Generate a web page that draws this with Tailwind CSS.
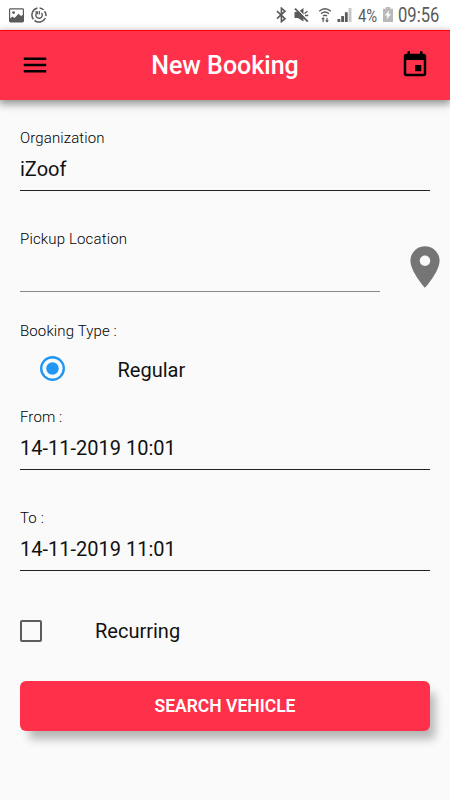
<!DOCTYPE html>
<html lang="en">
<head>
  <meta charset="UTF-8">
  <meta name="viewport" content="width=device-width, initial-scale=1.0">
  <title>New Booking</title>
  <script src="https://cdn.jsdelivr.net/npm/@tailwindcss/browser@4"></script>
</head>
<body class="bg-[#fafafa] h-[800px] overflow-hidden font-['Roboto',sans-serif] text-[#111]">

  <!-- Status bar -->
  <div class="h-[30px] bg-white flex items-center justify-between pl-[9px] pr-[10px] text-[#5a5a5a]">
    <div class="flex items-center gap-[7px]">
      <svg class="w-[15px] h-[15px]" viewBox="0 0 15 15">
        <rect x=".6" y=".9" width="13.8" height="13" rx=".8" fill="none" stroke="currentColor" stroke-width="1.2"/>
        <path d="M1 14v-3.5l2.5-2 2 1.5 4-4.2L12 8l2-1.2V14z" fill="currentColor"/>
        <circle cx="4.6" cy="4.6" r="1.4" fill="currentColor"/>
      </svg>
      <svg class="w-4 h-4" viewBox="0 0 16 16" fill="none" stroke="currentColor">
        <path d="M6.4 1.1a7.1 7.1 0 0 0-4 11.2M3.4 13.4a7.1 7.1 0 0 0 11-2.4M15 9.2a7.1 7.1 0 0 0-1.4-5M12.6 2.7A7 7 0 0 0 8.6.9" stroke-width="1.5"/>
        <path d="M6 5.6a3.2 3.2 0 1 0 4.4.3" stroke-width="1.4"/>
        <path d="M4.3 4.9h2.3v2.3M8.4 4v3.4" stroke-width="1.1"/>
      </svg>
    </div>
    <div class="flex items-center">
      <svg class="w-[11px] h-4 mr-[7px]" viewBox="0 0 11 16" fill="none" stroke="currentColor" stroke-width="1.6">
        <path d="M1 4.2l8 7.5-3.6 3V1.2l3.6 3-8 7.5"/>
      </svg>
      <svg class="w-4 h-4 mr-[8px]" viewBox="0 0 16 16">
        <path d="M.5 5h3.5l5.5-4v13.4L4 11H.5z" fill="currentColor"/>
        <path d="M1.8 0.8l13 13" stroke="#fff" stroke-width="1.4"/>
        <path d="M1 1.6l12.8 13" stroke="currentColor" stroke-width="1.9"/>
        <path d="M10.5 6.5l3-2.3M11 8.5h3.3" stroke="currentColor" stroke-width="1.3"/>
      </svg>
      <svg class="w-[14px] h-4 mr-[5px]" viewBox="0 0 14 16" fill="none" stroke="currentColor" stroke-width="1.4">
        <path d="M1.2 4.2q5.8-5 11.6 0M3.1 6.7q3.9-3.3 7.8 0M5 9q2-1.6 4 0"/>
        <path d="M5.1 15v-4M9 10.7v4" stroke-width="1.2"/>
        <path d="M3.2 12.2l1.9-2.2L7 12.2zM7.1 13.2l1.9 2.2 1.9-2.2z" fill="currentColor" stroke="none"/>
      </svg>
      <svg class="w-[15px] h-4 mr-[6px]" viewBox="0 0 15 16" fill="currentColor">
        <path d="M.5 12h2.8v3H.5zM4.2 9.1H7V15H4.2zM7.9 5.3h2.8V15H7.9z"/>
        <path d="M11.6 1h2.9v14h-2.9z" fill="#c8c8c8"/>
      </svg>
      <span class="w-[21px] text-[19px] leading-none"><span class="inline-block origin-left scale-x-[.78]">4%</span></span>
      <svg class="w-[10px] h-[15px] ml-[4px] mr-[5px] -mt-px" viewBox="0 0 10 15">
        <path d="M0 1.7h2.8V0h4.4v1.7H10V15H0z" fill="#b9b9b9"/>
        <path d="M6 3.3L1.9 8.6h2.5l-.7 3.8L8 7.1H5.5z" fill="#fff"/>
      </svg>
      <span class="w-[42px] text-[20px] leading-none"><span class="inline-block origin-left scale-x-[.83]">09:56</span></span>
    </div>
  </div>

  <!-- App bar -->
  <header class="relative h-[70px] bg-[#ff3049] border-t border-[#ff0008] shadow-[0_3px_8px_1px_rgba(0,0,0,0.42)] flex items-center justify-between px-5 pb-[2px]">
    <svg class="w-[30px] h-[30px]" viewBox="0 0 24 24"><path d="M3 18h18v-2H3v2zm0-5h18v-2H3v2zm0-7v2h18V6H3z"/></svg>
    <h1 class="text-white text-[25px] font-medium leading-[30px] pt-[2px]">New Booking</h1>
    <svg class="w-[30px] h-[30px]" viewBox="0 0 24 24"><path d="M17 12h-5v5h5v-5zM16 1v2H8V1H6v2H5c-1.11 0-1.99.9-1.99 2L3 19c0 1.1.89 2 2 2h14c1.1 0 2-.9 2-2V5c0-1.1-.9-2-2-2h-1V1h-2zm3 18H5V8h14v11z"/></svg>
  </header>

  <main class="px-5 pt-[28px]">
    <!-- Organization -->
    <div class="h-[63px] border-b border-[#222]">
      <p class="text-[15px] leading-5 font-light tracking-[0.12px] text-black">Organization</p>
      <p class="text-[20px] leading-6 mt-[9px]">iZoof</p>
    </div>

    <!-- Pickup location -->
    <div class="mt-[38px] h-[65px] flex">
      <div class="w-[360px] h-[63px] border-b border-[#888]">
        <p class="text-[15px] leading-5 font-light tracking-[0.15px] text-black">Pickup Location</p>
      </div>
      <svg class="w-[50px] h-[50px] ml-5 mt-[13px] -mr-5 shrink-0" viewBox="0 0 24 24" fill="#757575"><path d="M12 2C8.13 2 5 5.13 5 9c0 5.25 7 13 7 13s7-7.75 7-13c0-3.87-3.13-7-7-7zm0 9.5c-1.38 0-2.5-1.12-2.5-2.5s1.12-2.5 2.5-2.5 2.5 1.12 2.5 2.5-1.12 2.5-2.5 2.5z"/></svg>
    </div>

    <!-- Booking type -->
    <p class="text-[15px] leading-5 font-light tracking-[0.12px] text-black mt-[27px]">Booking Type :</p>
    <label class="flex items-center h-[49px] pl-5 mt-[3px]">
      <svg class="w-[25px] h-[25px] mr-[52.5px]" viewBox="0 0 25 25">
        <circle cx="12.5" cy="12.5" r="11.3" fill="none" stroke="#2196f3" stroke-width="2.4"/>
        <circle cx="12.5" cy="12.5" r="6.25" fill="#2196f3"/>
      </svg>
      <span class="text-[20px] leading-6 pt-[2px]">Regular</span>
    </label>

    <!-- From / To -->
    <div class="mt-[14px] h-[63px] border-b border-[#222]">
      <p class="text-[15px] leading-5 font-light tracking-[0.12px] text-black">From :</p>
      <p class="text-[20px] leading-6 mt-[9px]">14-11-2019 10:01</p>
    </div>
    <div class="mt-[38px] h-[63px] border-b border-[#222]">
      <p class="text-[15px] leading-5 font-light tracking-[0.12px] text-black">To :</p>
      <p class="text-[20px] leading-6 mt-[9px]">14-11-2019 11:01</p>
    </div>

    <!-- Recurring -->
    <label class="flex items-center h-[50px] mt-[35px]">
      <span class="w-[22px] h-[22px] border-2 border-[#5c5c5c] rounded-[2px] mr-[53px]"></span>
      <span class="text-[20px] leading-6">Recurring</span>
    </label>

    <button class="block w-full h-[50px] mt-[25px] rounded-[6px] bg-[#ff3049] text-white text-[17.5px] font-semibold shadow-[7px_10px_10px_-2px_rgba(0,0,0,0.28)]">SEARCH VEHICLE</button>
  </main>

</body>
</html>
